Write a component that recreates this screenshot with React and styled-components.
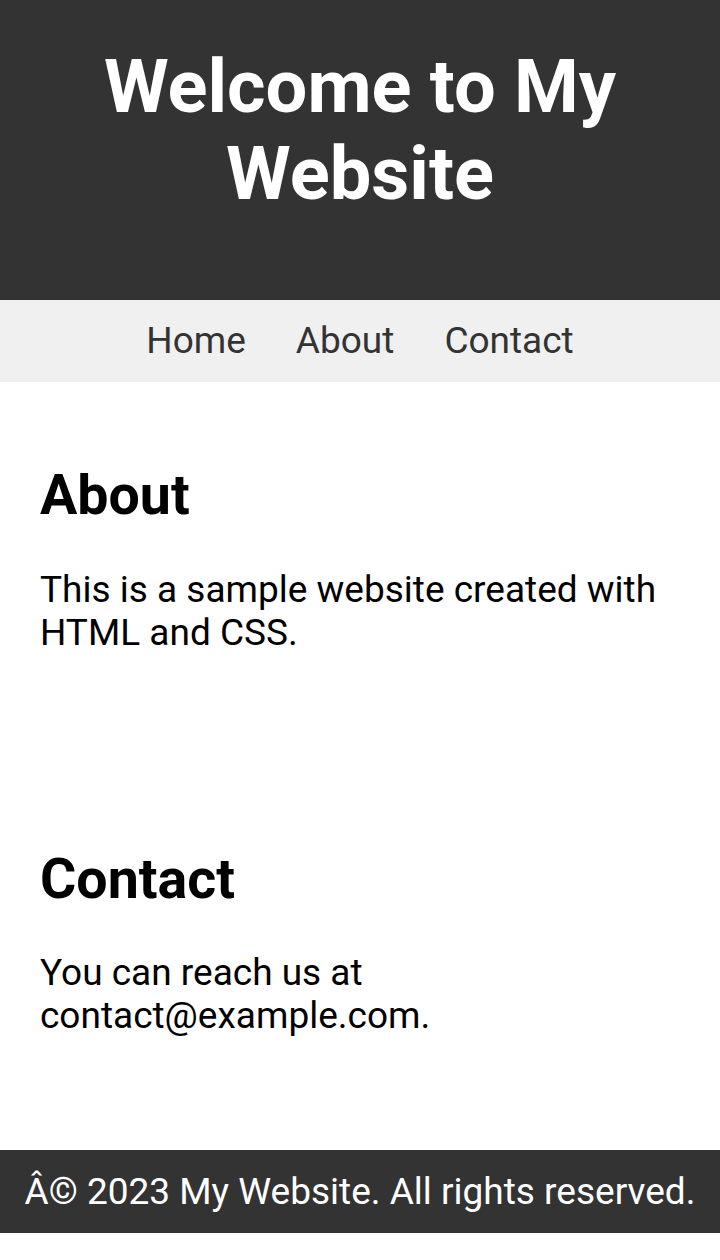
import React from "react";
import styled, { createGlobalStyle } from "styled-components";

const GlobalStyle = createGlobalStyle`
  html, body {
    margin: 0;
    padding: 0;
    background: #fff;
  }
  body {
    font-family: Roboto, "Liberation Sans", Arial, sans-serif;
    font-size: 37px;
    line-height: normal;
    color: #000;
  }
`;

const Header = styled.header`
  background: #333;
  color: #fff;
  text-align: center;
  height: 300px;
  box-sizing: border-box;
  padding: 43px 20px 0;
`;

const Title = styled.h1`
  margin: 0;
  font-size: 2em;
  font-weight: 700;
`;

const Nav = styled.nav`
  background: #f0f0f0;
  display: flex;
  justify-content: center;
  gap: 50px;
  height: 82px;
  box-sizing: border-box;
  padding-top: 19px;
`;

const NavLink = styled.a`
  color: #333;
  text-decoration: none;
`;

const Section = styled.section`
  padding: 40px;
  margin-bottom: 35px;

  &:last-of-type {
    margin-bottom: 36px;
  }
`;

const Heading = styled.h2`
  margin: 41px 0 39.5px;
  font-size: 1.5em;
  font-weight: 700;
`;

const Text = styled.p`
  margin: 0 0 37px;
`;

const Footer = styled.footer`
  background: #333;
  color: #fff;
  text-align: center;
  padding: 19.8px 0;
`;

export default function App() {
  return (
    <>
      <GlobalStyle />
      <Header>
        <Title>Welcome to My Website</Title>
      </Header>
      <Nav>
        <NavLink href="#home">Home</NavLink>
        <NavLink href="#about">About</NavLink>
        <NavLink href="#contact">Contact</NavLink>
      </Nav>
      <Section id="about">
        <Heading>About</Heading>
        <Text>This is a sample website created with HTML and CSS.</Text>
      </Section>
      <Section id="contact">
        <Heading>Contact</Heading>
        <Text>You can reach us at contact@example.com.</Text>
      </Section>
      <Footer>Â© 2023 My Website. All rights reserved.</Footer>
    </>
  );
}
